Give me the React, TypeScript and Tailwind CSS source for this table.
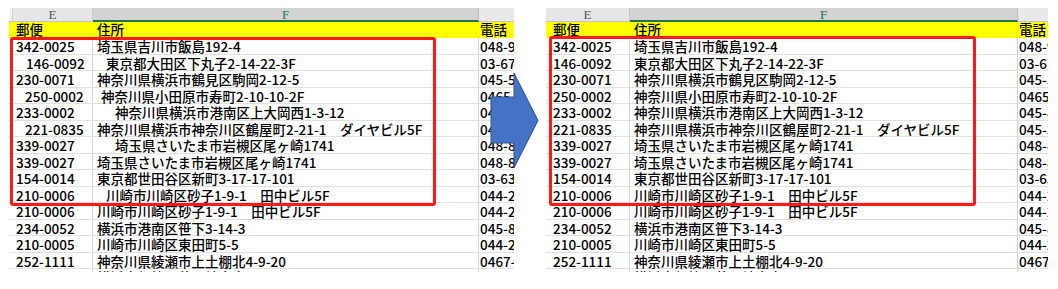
import React from 'react';

type Row = {
  zip: string;
  zipCls: string;
  addr: string;
  addrCls: string;
  tel: string;
};

// left sheet: the raw data, with stray leading spaces in some cells
const rowsBefore: Row[] = [
  { zip: '342-0025', zipCls: 'pl-[7px]', addr: '埼玉県吉川市飯島192-4', addrCls: 'pl-[4px]', tel: '048-981-1111' },
  { zip: '146-0092', zipCls: 'pl-[17px]', addr: '東京都大田区下丸子2-14-22-3F', addrCls: 'pl-[13px]', tel: '03-6785-1111' },
  { zip: '230-0071', zipCls: 'pl-[7px]', addr: '神奈川県横浜市鶴見区駒岡2-12-5', addrCls: 'pl-[4px]', tel: '045-571-1111' },
  { zip: '250-0002', zipCls: 'pl-[16px]', addr: '神奈川県小田原市寿町2-10-10-2F', addrCls: 'pl-[8px]', tel: '0465-11-1111' },
  { zip: '233-0002', zipCls: 'pl-[7px]', addr: '神奈川県横浜市港南区上大岡西1-3-12', addrCls: 'pl-[22px]', tel: '045-841-1111' },
  { zip: '221-0835', zipCls: 'pl-[16px]', addr: '神奈川県横浜市神奈川区鶴屋町2-21-1　ダイヤビル5F', addrCls: 'pl-[4px]', tel: '045-311-1111' },
  { zip: '339-0027', zipCls: 'pl-[7px]', addr: '埼玉県さいたま市岩槻区尾ヶ崎1741', addrCls: 'pl-[22px]', tel: '048-894-1111' },
  { zip: '339-0027', zipCls: 'pl-[7px]', addr: '埼玉県さいたま市岩槻区尾ヶ崎1741', addrCls: 'pl-[4px]', tel: '048-894-1111' },
  { zip: '154-0014', zipCls: 'pl-[7px]', addr: '東京都世田谷区新町3-17-17-101', addrCls: 'pl-[4px]', tel: '03-6326-1111' },
  { zip: '210-0006', zipCls: 'pl-[7px]', addr: '川崎市川崎区砂子1-9-1　田中ビル5F', addrCls: 'pl-[13px]', tel: '044-211-1111' },
  { zip: '210-0006', zipCls: 'pl-[7px]', addr: '川崎市川崎区砂子1-9-1　田中ビル5F', addrCls: 'pl-[4px]', tel: '044-211-1111' },
  { zip: '234-0052', zipCls: 'pl-[7px]', addr: '横浜市港南区笹下3-14-3', addrCls: 'pl-[4px]', tel: '045-845-1111' },
  { zip: '210-0005', zipCls: 'pl-[7px]', addr: '川崎市川崎区東田町5-5', addrCls: 'pl-[4px]', tel: '044-222-1111' },
  { zip: '252-1111', zipCls: 'pl-[7px]', addr: '神奈川県綾瀬市上土棚北4-9-20', addrCls: 'pl-[4px]', tel: '0467-11-1111' },
  { zip: '224-0032', zipCls: 'pl-[7px]', addr: '横浜市都筑区茅ケ崎中央1-1', addrCls: 'pl-[4px]', tel: '045-941-1111' },
];

// right sheet: same data once the spaces are trimmed
const rowsAfter: Row[] = rowsBefore.map((r) => ({ ...r, zipCls: 'pl-[7px]', addrCls: 'pl-[4px]' }));

type SheetProps = {
  rows: Row[];
  widthCls: string;
  eCls: string;
  fCls: string;
  tCls: string;
  stub: boolean;
  boxCls: string;
};

function Sheet({ rows, widthCls, eCls, fCls, tCls, stub, boxCls }: SheetProps) {
  return (
    <div className={`relative h-[264px] overflow-hidden font-['Noto_Sans_CJK_JP','Noto_Sans',sans-serif] text-[13.5px] leading-none font-medium text-black ${widthCls}`}>
      {/* column letters */}
      <div className="flex h-[14px] font-['Liberation_Serif',serif] text-[13px] font-normal">
        <div className={`flex h-full border-r border-b border-[#c6c6c6] bg-[#e6e6e6] ${eCls}`}>
          {stub && <div className="h-full w-[4px] border-r border-[#d0d0d0] bg-[#f3f3f3]" />}
          <div className="flex flex-1 items-center justify-center text-[#555]">E</div>
        </div>
        <div className={`flex h-full items-center justify-center border-r border-b-2 border-r-[#bdbdbd] border-b-[#217346] bg-[#d3d3d3] text-[#217346] ${fCls}`}>
          F
        </div>
        <div className={`h-full border-b border-[#c6c6c6] bg-[#e9e9e9] ${tCls}`} />
      </div>

      {/* yellow title row */}
      <div className="flex h-[16px] items-center bg-[#ffff00]">
        <div className={`pl-[7px] ${eCls}`}>郵便</div>
        <div className={`pl-[4px] ${fCls}`}>住所</div>
        <div className={`overflow-hidden pl-[1px] whitespace-nowrap ${tCls}`}>電話</div>
      </div>

      {rows.map((r, i) => (
        <div key={i} className="flex h-[16.5px] items-center border-b border-[#e1e1e1]">
          <div className={`h-full border-r border-[#d4d4d4] pt-[2px] whitespace-nowrap ${eCls} ${r.zipCls}`}>{r.zip}</div>
          <div className={`h-full border-r border-[#d4d4d4] pt-[2px] whitespace-nowrap ${fCls} ${r.addrCls}`}>{r.addr}</div>
          <div className={`h-full overflow-hidden pt-[2px] pl-[1px] whitespace-nowrap ${tCls}`}>{r.tel}</div>
        </div>
      ))}

      {/* highlight frame */}
      <div className={`absolute rounded-[3px] border-[3px] border-[#ff1a1a] ${boxCls}`} />
    </div>
  );
}

export default function App() {
  return (
    <div className="relative h-[289px] w-[1058px] overflow-hidden bg-white">
      <div className="flex pt-[8px]">
        <div className="ml-[9px]">
          <Sheet
            rows={rowsBefore}
            widthCls="w-[505px]"
            eCls="w-[84px]"
            fCls="w-[386px]"
            tCls="w-[35px]"
            stub
            boxCls="left-[1px] top-[29px] h-[169px] w-[426px]"
          />
        </div>
        <div className="ml-[32px]">
          <Sheet
            rows={rowsAfter}
            widthCls="w-[502px]"
            eCls="w-[84px]"
            fCls="w-[388px]"
            tCls="w-[30px]"
            stub={false}
            boxCls="left-[3px] top-[28px] h-[170px] w-[427px]"
          />
        </div>
      </div>

      {/* arrow between the two sheets */}
      <svg className="absolute top-[71px] left-[489px]" width="52" height="100" viewBox="0 0 52 100">
        <polygon points="2,26 25,26 25,2 49,49.5 25,97 25,72 2,72" fill="#4472c4" stroke="#2f528f" strokeWidth="1" />
      </svg>
    </div>
  );
}
